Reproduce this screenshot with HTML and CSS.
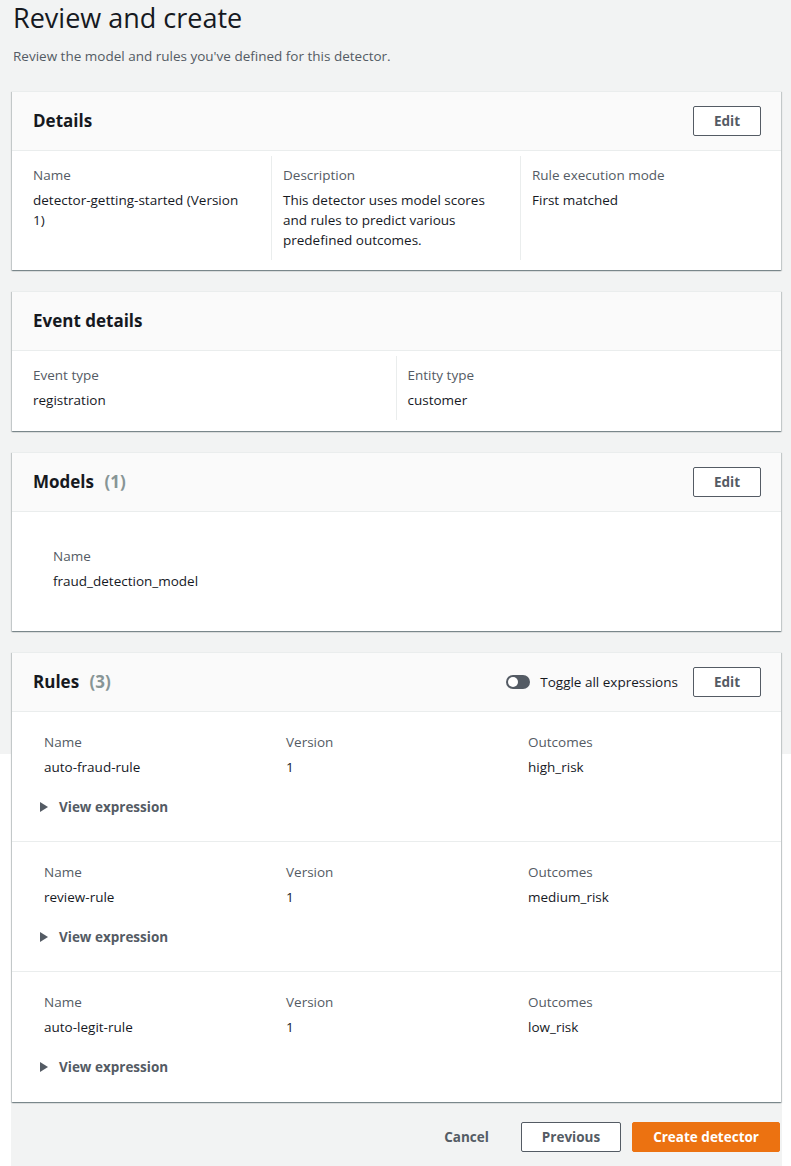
FILE: index.html
```html
<!DOCTYPE html>
<html lang="en">
<head>
<meta charset="utf-8">
<title>Review and create</title>
<link rel="stylesheet" href="styles.css">
</head>
<body>
<div class="page">
  <div class="column">
    <header class="page-head">
      <h1 class="title">Review and create</h1>
      <p class="subtitle">Review the model and rules you've defined for this detector.</p>
    </header>

    <section class="card">
      <div class="card-head">
        <h2 class="card-title">Details</h2>
        <div class="head-actions"><button class="btn">Edit</button></div>
      </div>
      <div class="kv kv-3">
        <div class="kv-col">
          <div class="kv-label">Name</div>
          <div class="kv-value">detector-getting-started (Version 1)</div>
        </div>
        <div class="kv-col">
          <div class="kv-label">Description</div>
          <div class="kv-value">This detector uses model scores and rules to predict various predefined outcomes.</div>
        </div>
        <div class="kv-col">
          <div class="kv-label">Rule execution mode</div>
          <div class="kv-value">First matched</div>
        </div>
      </div>
    </section>

    <section class="card">
      <div class="card-head">
        <h2 class="card-title">Event details</h2>
      </div>
      <div class="kv kv-2">
        <div class="kv-col">
          <div class="kv-label">Event type</div>
          <div class="kv-value">registration</div>
        </div>
        <div class="kv-col">
          <div class="kv-label">Entity type</div>
          <div class="kv-value">customer</div>
        </div>
      </div>
    </section>

    <section class="card">
      <div class="card-head">
        <h2 class="card-title">Models <span class="count">(1)</span></h2>
        <div class="head-actions"><button class="btn">Edit</button></div>
      </div>
      <div class="models-body">
        <div class="kv-col plain">
          <div class="kv-label">Name</div>
          <div class="kv-value">fraud_detection_model</div>
        </div>
      </div>
    </section>

    <section class="card">
      <div class="card-head">
        <h2 class="card-title">Rules <span class="count">(3)</span></h2>
        <div class="head-actions">
          <label class="toggle"><span class="switch"><span class="knob"></span></span><span class="toggle-text">Toggle all expressions</span></label>
          <button class="btn">Edit</button>
        </div>
      </div>
      <div class="rule">
        <div class="rule-grid">
          <div><div class="kv-label">Name</div><div class="kv-value">auto-fraud-rule</div></div>
          <div><div class="kv-label">Version</div><div class="kv-value">1</div></div>
          <div><div class="kv-label">Outcomes</div><div class="kv-value">high_risk</div></div>
        </div>
        <div class="expander"><span class="caret"></span>View expression</div>
      </div>
      <div class="rule">
        <div class="rule-grid">
          <div><div class="kv-label">Name</div><div class="kv-value">review-rule</div></div>
          <div><div class="kv-label">Version</div><div class="kv-value">1</div></div>
          <div><div class="kv-label">Outcomes</div><div class="kv-value">medium_risk</div></div>
        </div>
        <div class="expander"><span class="caret"></span>View expression</div>
      </div>
      <div class="rule">
        <div class="rule-grid">
          <div><div class="kv-label">Name</div><div class="kv-value">auto-legit-rule</div></div>
          <div><div class="kv-label">Version</div><div class="kv-value">1</div></div>
          <div><div class="kv-label">Outcomes</div><div class="kv-value">low_risk</div></div>
        </div>
        <div class="expander"><span class="caret"></span>View expression</div>
      </div>
    </section>

    <footer class="actions">
      <button class="btn btn-link">Cancel</button>
      <button class="btn">Previous</button>
      <button class="btn btn-primary">Create detector</button>
    </footer>
  </div>
</div>
</body>
</html>
```

FILE: styles.css
```css
* { box-sizing: border-box; }

html, body {
  margin: 0;
  padding: 0;
}

body {
  font-family: "Open Sans", "Noto Sans", Arial, sans-serif;
  font-size: 13.5px;
  line-height: 20px;
  color: #16191f;
  background: linear-gradient(#f2f3f3 0, #f2f3f3 754px, #ffffff 754px);
  min-height: 1166px;
}

.page {
  padding-left: 11px;
  width: 782px;
}

.column {
  background: #f2f3f3;
  padding: 0 1px 16px 1px;
  min-height: 1166px;
}

.page-head {
  padding-left: 1px;
}

.title {
  margin: 0;
  font-size: 27px;
  line-height: 35px;
  font-weight: 400;
  color: #16191f;
}

.subtitle {
  margin: 11px 0 0;
  line-height: 20px;
  color: #545b64;
}

.card {
  background: #fff;
  margin-top: 25px;
  border-top: 1px solid #eaeded;
  box-shadow: 0 1px 1px 0 rgba(0, 28, 36, 0.3), 1px 1px 1px 0 rgba(0, 28, 36, 0.15), -1px 1px 1px 0 rgba(0, 28, 36, 0.15);
}

.card + .card {
  margin-top: 21px;
}

.card-head {
  display: flex;
  align-items: center;
  justify-content: space-between;
  height: 59px;
  padding: 0 20px 0 21px;
  background: #fafafa;
  border-bottom: 1px solid #eaeded;
}

.card-title {
  margin: 0;
  font-size: 17px;
  line-height: 22px;
  font-weight: 700;
  color: #16191f;
}

.count {
  color: #879596;
  font-weight: 700;
  margin-left: 6px;
}

.head-actions {
  display: flex;
  align-items: center;
  gap: 15px;
}

.btn {
  font-family: inherit;
  font-size: 13.5px;
  line-height: 20px;
  font-weight: 700;
  color: #545b64;
  background: #fff;
  border: 1px solid #545b64;
  border-radius: 2px;
  padding: 4px 20px;
  cursor: pointer;
}

.btn-link {
  border-color: transparent;
  background: transparent;
}

.btn-primary {
  background: #ec7211;
  border-color: #ec7211;
  color: #fff;
}

.kv {
  display: grid;
  padding: 5px 12px 10px 10px;
}

.kv-3 { grid-template-columns: repeat(3, 1fr); }
.kv-2 {
  grid-template-columns: repeat(2, 1fr);
  padding-bottom: 11px;
}

.kv-col {
  padding: 8px 20px 10px 11px;
}

.kv-col + .kv-col {
  border-left: 1px solid #eaeded;
}

.kv-label {
  color: #545b64;
  line-height: 22px;
  margin-bottom: 4px;
}

.kv-value {
  color: #16191f;
  line-height: 20px;
}

.models-body {
  padding: 25px 12px 30px 30px;
}

.toggle {
  display: flex;
  align-items: center;
  gap: 10px;
  color: #16191f;
}

.switch {
  display: flex;
  align-items: center;
  width: 24px;
  height: 14px;
  border-radius: 7px;
  background: #545b64;
  padding: 2px;
}

.knob {
  width: 10px;
  height: 10px;
  border-radius: 50%;
  background: #fff;
}

.rule {
  padding: 19px 20px 24px 28px;
}

.rule:last-child {
  padding-bottom: 25px;
}

.rule + .rule {
  border-top: 1px solid #eaeded;
}

.rule-grid {
  display: grid;
  grid-template-columns: 242px 242px 1fr;
  padding-left: 4px;
}

.expander {
  display: flex;
  align-items: center;
  margin-top: 20px;
  font-weight: 700;
  color: #545b64;
}

.caret {
  width: 0;
  height: 0;
  border-top: 5px solid transparent;
  border-bottom: 5px solid transparent;
  border-left: 8px solid #545b64;
  margin-right: 11px;
}

.actions {
  display: flex;
  justify-content: flex-end;
  gap: 11px;
  margin-top: 20px;
  padding-right: 1px;
}
```
